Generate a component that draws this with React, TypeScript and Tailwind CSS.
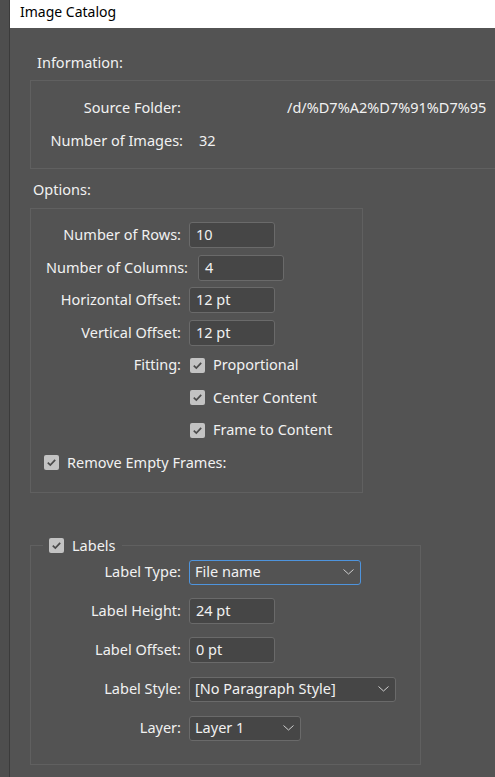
import React from "react";

function Check({ className = "" }: { className?: string }) {
  return (
    <span className={`flex h-[15px] w-[15px] shrink-0 items-center justify-center rounded-[2px] bg-[#c3c3c3] ${className}`}>
      <svg width="11" height="11" viewBox="0 0 11 11" fill="none">
        <path d="M1.8 5.6 L4.3 8.1 L9.2 2.8" stroke="#4b4b4b" strokeWidth="1.7" />
      </svg>
    </span>
  );
}

function Chevron() {
  return (
    <svg width="11" height="6" viewBox="0 0 11 6" fill="none" className="shrink-0">
      <path d="M0.5 0.5 L5.5 5 L10.5 0.5" stroke="#cfcfcf" strokeWidth="1" />
    </svg>
  );
}

function TextBox({ value, w = "w-[86px]" }: { value: string; w?: string }) {
  return (
    <div className={`flex h-[26px] ${w} shrink-0 items-center rounded-[3px] border border-[#6a6a6a] bg-[#464646] pl-[6px]`}>
      {value}
    </div>
  );
}

function Select({ value, w, focused = false }: { value: string; w: string; focused?: boolean }) {
  return (
    <div
      className={`flex h-[25px] ${w} shrink-0 items-center justify-between rounded-[3px] border pl-[5px] pr-[6px] ${
        focused ? "border-[#4e94dd] bg-[#535353]" : "border-[#6a6a6a] bg-[#464646]"
      }`}
    >
      <span>{value}</span>
      <Chevron />
    </div>
  );
}

function Row({ label, children, labelW = "w-[150px]", gap = "gap-[8px]", h = "h-[26px]" }: any) {
  return (
    <div className={`flex ${h} items-center ${gap}`}>
      <span className={`${labelW} shrink-0 whitespace-nowrap text-right`}>{label}</span>
      {children}
    </div>
  );
}

export default function App() {
  return (
    <div className="flex h-[777px] w-[495px] overflow-hidden bg-[#535353] font-['Noto_Sans','Segoe_UI',sans-serif] text-[14.5px] text-[#f1f1f1]">
      <div className="w-[10px] shrink-0 border-r border-[#3b3b3b] bg-[#4e4e4e]" />

      <div className="flex min-w-0 flex-1 flex-col">
        <div className="h-[28px] shrink-0 bg-white pl-[10px] pt-[2px] text-[14px] leading-[20px] text-black">
          Image Catalog
        </div>

        <div className="flex flex-col pl-[20px]">
          <p className="ml-[7px] mt-[24px] leading-[20px]">Information:</p>
          <div className="mt-[8px] flex w-[500px] flex-col gap-[13px] border border-[#606060] pb-[18px] pt-[16px] leading-[20px]">
            <div className="flex">
              <span className="w-[150px] shrink-0 text-right">Source Folder:</span>
              <span className="ml-[106px] whitespace-nowrap">/d/%D7%A2%D7%91%D7%95</span>
            </div>
            <div className="flex">
              <span className="w-[152px] shrink-0 text-right">Number of Images:</span>
              <span className="ml-[16px]">32</span>
            </div>
          </div>

          <p className="ml-[3px] mt-[10px] leading-[20px]">Options:</p>
          <div className="mt-[9px] flex w-[333px] flex-col gap-[6.5px] border border-[#606060] pb-[16px] pt-[13px]">
            <Row label="Number of Rows:">
              <TextBox value="10" />
            </Row>
            <Row label="Number of Columns:" labelW="w-[157px]" gap="gap-[10px]">
              <TextBox value="4" />
            </Row>
            <Row label="Horizontal Offset:">
              <TextBox value="12 pt" />
            </Row>
            <Row label="Vertical Offset:">
              <TextBox value="12 pt" />
            </Row>
            <Row label="Fitting:" gap="gap-[9px]">
              <Check />
              <span className="ml-[-1px]">Proportional</span>
            </Row>
            <div className="flex h-[26px] items-center gap-[8px] pl-[159px]">
              <Check />
              <span>Center Content</span>
            </div>
            <div className="flex h-[26px] items-center gap-[8px] pl-[159px]">
              <Check />
              <span>Frame to Content</span>
            </div>
            <div className="flex h-[26px] items-center gap-[8px] pl-[13px]">
              <Check />
              <span>Remove Empty Frames:</span>
            </div>
          </div>

          <fieldset className="mt-[42px] w-[391px] border border-[#606060] pb-[23px]">
            <legend className="ml-[12px] flex h-[22px] items-center gap-[8px] px-[6px]">
              <Check />
              <span>Labels</span>
            </legend>
            <div className="flex flex-col gap-[14px] pt-[3px]">
              <Row label="Label Type:" h="h-[25px]">
                <Select value="File name" w="w-[172px]" focused />
              </Row>
              <Row label="Label Height:" h="h-[25px]">
                <TextBox value="24 pt" />
              </Row>
              <Row label="Label Offset:" h="h-[25px]">
                <TextBox value="0 pt" />
              </Row>
              <Row label="Label Style:" h="h-[25px]">
                <Select value="[No Paragraph Style]" w="w-[207px]" />
              </Row>
              <Row label="Layer:" h="h-[25px]">
                <Select value="Layer 1" w="w-[112px]" />
              </Row>
            </div>
          </fieldset>
        </div>
      </div>
    </div>
  );
}
